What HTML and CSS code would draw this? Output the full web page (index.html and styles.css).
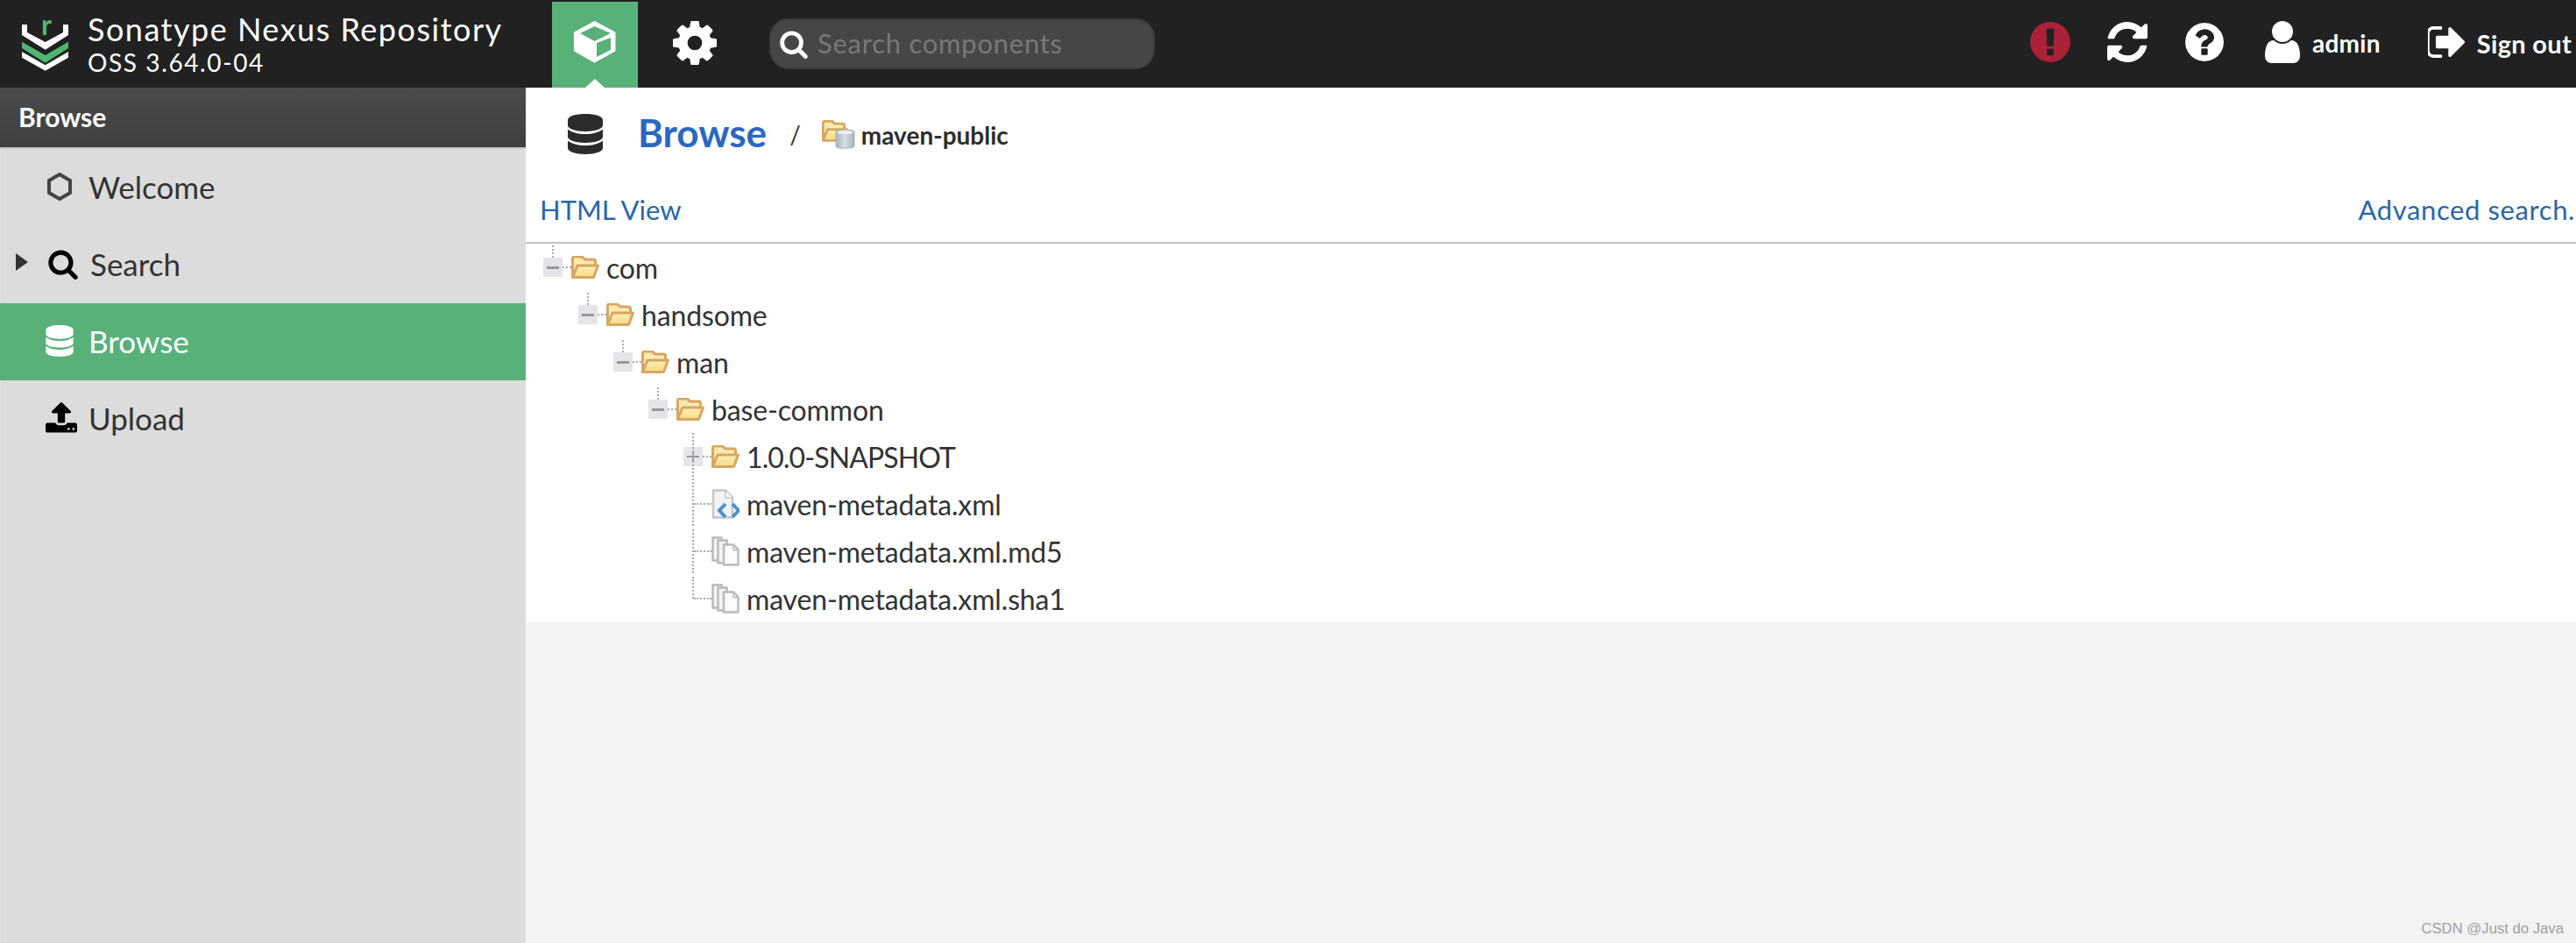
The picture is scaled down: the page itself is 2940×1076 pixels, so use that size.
FILE: index.html
```html
<!DOCTYPE html>
<html lang="en">
<head>
<meta charset="utf-8">
<title>Browse - Nexus Repository</title>
<link rel="stylesheet" href="styles.css">
</head>
<body>
<svg class="defs" width="0" height="0" aria-hidden="true">
  <defs>
    <linearGradient id="fg" x1="0" y1="0" x2="0" y2="1"><stop offset="0" stop-color="#fdf0b8"/><stop offset="1" stop-color="#f6d985"/></linearGradient>
    <linearGradient id="cyl" x1="0" y1="0" x2="1" y2="0"><stop offset="0" stop-color="#aeb7be"/><stop offset=".5" stop-color="#d5dce1"/><stop offset="1" stop-color="#a9b2b9"/></linearGradient>
    <symbol id="folder" viewBox="0 0 32 26">
      <path d="M1.500 24.500V3a2 2 0 0 1 2-2h9l3 3h10a2 2 0 0 1 2 2v5" fill="#fbeab0" stroke="#d6a663" stroke-width="3"/>
      <path d="M1.500 24.500L7 11h23.500l-5 13.500z" fill="url(#fg)" stroke="#d6a663" stroke-width="3" stroke-linejoin="round"/>
    </symbol>
    <symbol id="doc" viewBox="0 0 32 34">
      <path d="M2 1.500h14l8 8v23H2z" fill="#f2f3f6" stroke="#c4c6ca" stroke-width="2.400"/>
      <path d="M16 2v8h8" fill="#fff" stroke="#c4c6ca" stroke-width="1.600"/>
      <path d="M16 17l-7 7.500 7 7.500M24 17l7 7.500-7 7.500" fill="none" stroke="#4a90cc" stroke-width="4"/>
    </symbol>
    <symbol id="files" viewBox="0 0 32 34">
      <path d="M1.500 1.500h10v26h-10z" fill="#f1f2f3" stroke="#b9babd" stroke-width="2.400"/>
      <path d="M7.500 4.500h10v26h-10z" fill="#f1f2f3" stroke="#b9babd" stroke-width="2.400"/>
      <path d="M14 9.500h11l5.500 5.500v17.500H14z" fill="#fbfbfb" stroke="#b9babd" stroke-width="2.400"/>
      <path d="M25 10v5.500h5.500" fill="none" stroke="#b9babd" stroke-width="1.400"/>
    </symbol>
    <symbol id="db" viewBox="0 0 40 46">
      <path d="M0 7C0 2.500 9 0 20 0s20 2.500 20 7v6c0 4-9 7-20 7S0 17 0 13z"/>
      <path d="M0 17.500c4 3.500 12 5.500 20 5.500s16-2 20-5.500V26c0 4-9 7-20 7S0 30 0 26z"/>
      <path d="M0 30.500c4 3.500 12 5.500 20 5.500s16-2 20-5.500V39c0 4-9 7-20 7S0 43 0 39z"/>
    </symbol>
    <symbol id="mag" viewBox="0 0 1792 1792"><path d="M1216 832q0-185-131.500-316.500t-316.500-131.500-316.500 131.500-131.500 316.500 131.500 316.500 316.500 131.500 316.500-131.500 131.500-316.500zm512 832q0 52-38 90t-90 38q-54 0-90-38l-343-342q-179 124-399 124-143 0-273.500-55.500t-225-150-150-225-55.500-273.500 55.500-273.500 150-225 225-150 273.500-55.500 273.500 55.500 225 150 150 225 55.500 273.500q0 220-124 399l343 343q37 37 37 90z"/></symbol>
  </defs>
</svg>

<div class="app">
  <header class="topbar">
    <div class="brand">
      <svg class="logo" viewBox="0 0 53 60" aria-hidden="true">
        <path d="M0 4h6v9l20.700 11L47 13V4h6v12L26.700 32.700 0 16z" fill="#fff"/>
        <path d="M0 23.700L26.700 39 53 23.700V31L26.700 47.700 0 31z" fill="#4fb573"/>
        <path d="M0 35l26.700 15.300L53 35v6.700L26.700 56.700 0 41.700z" fill="#fff"/>
        <text x="22" y="16" class="logo-r">r</text>
      </svg>
      <div class="brand-text">
        <div class="brand-name">Sonatype Nexus Repository</div>
        <div class="brand-ver">OSS 3.64.0-04</div>
      </div>
    </div>
    <div class="mode-tab active">
      <svg class="ico-cube" viewBox="0 0 48 48" aria-hidden="true">
        <path d="M23.500 1.500L46 13.500v20L23.500 46 1.500 33.500v-20z" fill="#fff" stroke="#fff" stroke-width="3" stroke-linejoin="round"/>
        <path d="M7 14l16.500-8L42 14l-18.500 9z" fill="#59b17a"/>
        <path d="M26 25l16-6v14l-16 8z" fill="#59b17a"/>
      </svg>
    </div>
    <div class="mode-tab gear-tab">
      <svg class="ico-gear" viewBox="128 128 1536 1536" aria-hidden="true"><path d="M1152 896q0-106-75-181t-181-75-181 75-75 181 75 181 181 75 181-75 75-181zm512-109v222q0 12-8 23t-20 13l-185 28q-19 54-39 91 35 50 107 138 10 12 10 25t-9 23q-27 37-99 108t-94 71q-12 0-26-9l-138-108q-44 23-91 38-16 136-29 186-7 28-36 28h-222q-14 0-24.500-8.500t-11.500-21.500l-28-184q-49-16-90-37l-141 107q-10 9-25 9-14 0-25-11-126-114-165-168-7-10-7-23 0-12 8-23 15-21 51-66.500t54-70.500q-27-50-41-99l-183-27q-13-2-21-12.500t-8-23.500v-222q0-12 8-23t19-13l186-28q14-46 39-92-40-57-107-138-10-12-10-24 0-10 9-23 26-36 98.500-107.500t94.500-71.500q13 0 26 10l138 107q44-23 91-38 16-136 29-186 7-28 36-28h222q14 0 24.500 8.500t11.500 21.500l28 184q49 16 90 37l142-107q9-9 24-9 13 0 25 10 129 119 165 170 7 8 7 22 0 12-8 23-15 21-51 66.500t-54 70.500q26 50 41 98l183 28q13 2 21 12.500t8 23.500z"/></svg>
    </div>
    <div class="searchbox">
      <svg class="ico-search"><use href="#mag"/></svg>
      <span class="placeholder">Search components</span>
    </div>
    <div class="spacer"></div>
    <svg class="ico-alert" viewBox="128 128 1536 1536" aria-hidden="true"><path d="M896 128q209 0 385 103t279 279 103 386-103 385.500-279 279.500-385 103-385.500-103-279.500-279.500-103-385.500 103-386 279.500-279 385.500-103zm128 1247v-190q0-14-9-23.500t-22-9.500h-192q-13 0-23 10t-10 23v190q0 13 10 23t23 10h192q13 0 22-9.500t9-23.500zm-2-344l18-621q0-12-10-18-10-8-24-8h-220q-14 0-24 8-10 6-10 18l17 621q0 10 10 17.500t24 7.500h185q14 0 23.500-7.500t10.500-17.500z"/></svg>
    <svg class="ico-refresh" viewBox="128 128 1536 1536" aria-hidden="true"><path d="M1639 1056q0 5-1 7-64 268-268 434.500t-478 166.500q-146 0-282.500-55t-243.500-157l-129 129q-19 19-45 19t-45-19-19-45v-448q0-26 19-45t45-19h448q26 0 45 19t19 45-19 45l-137 137q71 66 161 102t187 36q134 0 250-65t186-179q11-17 53-117 8-23 30-23h192q13 0 22.500 9.500t9.500 22.500zm25-800v448q0 26-19 45t-45 19h-448q-26 0-45-19t-19-45 19-45l138-138q-148-137-349-137-134 0-250 65t-186 179q-11 17-53 117-8 23-30 23h-199q-13 0-22.500-9.500t-9.500-22.500v-7q65-268 270-434.500t480-166.500q146 0 284 55.500t245 156.500l130-129q19-19 45-19t45 19 19 45z"/></svg>
    <svg class="ico-help" viewBox="128 128 1536 1536" aria-hidden="true"><path d="M1024 1376v-192q0-14-9-23t-23-9h-192q-14 0-23 9t-9 23v192q0 14 9 23t23 9h192q14 0 23-9t9-23zm256-672q0-88-55.500-163t-138.500-116-170-41q-243 0-371 213-15 24 8 42l132 100q7 6 19 6 16 0 25-12 53-68 86-92 34-24 86-24 48 0 85.500 26t37.500 59q0 38-20 61t-68 45q-63 28-115.500 86.500t-52.500 125.500v36q0 14 9 23t23 9h192q14 0 23-9t9-23q0-19 21.500-49.500t54.500-49.500q32-18 49-28.500t46-35 44.500-48 28-60.500 12.500-81zm384 192q0 209-103 385.500t-279.500 279.500-385.500 103-385.500-103-279.500-279.500-103-385.500 103-385.500 279.500-279.500 385.500-103 385.500 103 279.500 279.500 103 385.500z"/></svg>
    <svg class="ico-user" viewBox="256 128 1280 1536" aria-hidden="true"><path d="M1536 1399q0 109-62.500 187t-150.500 78h-854q-88 0-150.500-78t-62.500-187q0-85 8.500-160.500t31.500-152 58.500-131 94-89 134.500-34.500q131 128 313 128t313-128q76 0 134.500 34.500t94 89 58.500 131 31.500 152 8.500 160.500zm-256-887q0 159-112.500 271.500t-271.500 112.500-271.500-112.500-112.500-271.500 112.500-271.500 271.500-112.500 271.500 112.500 112.500 271.500z"/></svg>
    <span class="tb-label label-admin">admin</span>
    <svg class="ico-signout" viewBox="128 256 1536 1280" aria-hidden="true"><path d="M704 1440q0 4 1 20t.5 26.500-3 23.500-10 19.500-20.500 6.500h-320q-119 0-203.500-84.500t-84.500-203.500v-704q0-119 84.500-203.500t203.500-84.500h320q13 0 22.500 9.500t9.500 22.500q0 4 1 20t.5 26.500-3 23.500-10 19.500-20.500 6.500h-320q-66 0-113 47t-47 113v704q0 66 47 113t113 47h312l11.500 1 11.500 3 8 5.500 7 9 2 13.500zm928-544q0 26-19 45l-544 544q-19 19-45 19t-45-19-19-45v-288h-448q-26 0-45-19t-19-45v-384q0-26 19-45t45-19h448v-288q0-26 19-45t45-19 45 19l544 544q19 19 19 45z"/></svg>
    <span class="tb-label label-signout">Sign out</span>
  </header>

  <div class="body">
    <aside class="sidebar">
      <div class="side-head">Browse</div>
      <nav class="side-nav">
        <div class="nav-row">
          <span class="caret-slot"></span>
          <span class="nav-ico"><svg class="ico-hex" viewBox="0 0 30 32" aria-hidden="true"><path d="M15 2l12 7v14l-12 7-12-7V9z" fill="none" stroke="#444" stroke-width="4"/></svg></span>
          <span>Welcome</span>
        </div>
        <div class="nav-row">
          <span class="caret-slot"><span class="caret"></span></span>
          <span class="nav-ico"><svg class="ico-nav-search"><use href="#mag"/></svg></span>
          <span class="nav-search-label">Search</span>
        </div>
        <div class="nav-row selected">
          <span class="caret-slot"></span>
          <span class="nav-ico"><svg class="ico-nav-db"><use href="#db"/></svg></span>
          <span>Browse</span>
        </div>
        <div class="nav-row">
          <span class="caret-slot"></span>
          <span class="nav-ico"><svg class="ico-upload" viewBox="64 128 1664 1536" aria-hidden="true"><path d="M1344 1472q0-26-19-45t-45-19-45 19-19 45 19 45 45 19 45-19 19-45zm256 0q0-26-19-45t-45-19-45 19-19 45 19 45 45 19 45-19 19-45zm128-224v320q0 40-28 68t-68 28h-1472q-40 0-68-28t-28-68v-320q0-40 28-68t68-28h427q21 56 70.500 92t110.500 36h256q61 0 110.500-36t70.500-92h427q40 0 68 28t28 68zm-325-648q-17 40-59 40h-256v448q0 26-19 45t-45 19h-256q-26 0-45-19t-19-45v-448h-256q-42 0-59-40-17-39 14-69l448-448q18-19 45-19t45 19l448 448q31 30 14 69z"/></svg></span>
          <span>Upload</span>
        </div>
      </nav>
    </aside>

    <main class="main">
      <section class="panel">
        <div class="crumbs">
          <svg class="ico-title-db"><use href="#db"/></svg>
          <span class="crumb-title">Browse</span>
          <span class="crumb-sep">/</span>
          <svg class="ico-repo" viewBox="0 0 38 34" aria-hidden="true">
            <use href="#folder" width="30" height="25"/>
            <path d="M16 13c0-2.500 21-2.500 21 0v17c0 3-21 3-21 0z" fill="url(#cyl)" stroke="#a4adb4"/>
            <ellipse cx="26.500" cy="14" rx="9" ry="2.500" fill="#e9edf0"/>
          </svg>
          <span class="crumb-repo">maven-public</span>
        </div>
        <div class="linkbar">
          <span class="link">HTML View</span>
          <span class="link link-adv">Advanced search.</span>
        </div>
        <div class="tree">
          <div class="tree-row lvl-0"><span class="tog minus"></span><svg class="node folder"><use href="#folder"/></svg><span class="label">com</span></div>
          <div class="tree-row lvl-1"><span class="tog minus"></span><svg class="node folder"><use href="#folder"/></svg><span class="label">handsome</span></div>
          <div class="tree-row lvl-2"><span class="tog minus"></span><svg class="node folder"><use href="#folder"/></svg><span class="label">man</span></div>
          <div class="tree-row lvl-3"><span class="tog minus"></span><svg class="node folder"><use href="#folder"/></svg><span class="label">base-common</span></div>
          <div class="tree-row lvl-4"><span class="tog plus"></span><svg class="node folder"><use href="#folder"/></svg><span class="label caps">1.0.0-SNAPSHOT</span></div>
          <div class="tree-row lvl-4"><span class="tog leaf"></span><svg class="node file"><use href="#doc"/></svg><span class="label">maven-metadata.xml</span></div>
          <div class="tree-row lvl-4"><span class="tog leaf"></span><svg class="node file"><use href="#files"/></svg><span class="label">maven-metadata.xml.md5</span></div>
          <div class="tree-row lvl-4"><span class="tog leaf last"></span><svg class="node file"><use href="#files"/></svg><span class="label">maven-metadata.xml.sha1</span></div>
        </div>
      </section>
    </main>
  </div>
  <div class="watermark">CSDN @Just do Java</div>
</div>
</body>
</html>
```

FILE: styles.css
```css
* { box-sizing: border-box; }
html, body { margin: 0; height: 100%; overflow: hidden; }
body { font-family: Lato, "Open Sans", sans-serif; color: #333; }
.defs { position: absolute; }
.app { height: 1076px; display: flex; flex-direction: column; position: relative; background: #f3f3f3; }

.topbar { height: 100px; flex: none; background: #212121; display: flex; align-items: center; color: #fff; fill: #fff; }
.brand { width: 630px; flex: none; display: flex; align-items: center; padding-left: 25px; }
.logo { width: 53px; height: 60px; margin: 8px 22px 0 0; overflow: visible; }
.logo-r { font: 700 32px Lato, sans-serif; fill: #4fb573; }
.brand-text { display: flex; flex-direction: column; }
.brand-name { font-size: 36px; line-height: 42px; letter-spacing: 1.5px; }
.brand-ver { font-size: 28px; line-height: 34px; letter-spacing: 1.6px; }
.mode-tab { width: 98px; height: 98px; margin-top: 2px; flex: none; display: flex; align-items: center; justify-content: center; position: relative; }
.gear-tab { width: 130px; }
.mode-tab.active { background: #59b17a; }
.mode-tab.active::after { content: ""; position: absolute; left: 38px; bottom: 0; border: 11px solid transparent; border-top: 0; border-bottom: 10px solid #fff; }
.ico-cube { width: 48px; height: 48px; margin-top: -6px; }
.ico-gear { width: 50px; height: 50px; margin-top: -4px; }
.searchbox { margin-left: 20px; width: 440px; height: 58px; border-radius: 22px; background: #464646; border: 2px solid #3c3c3c; display: flex; align-items: center; padding-left: 9px; }
.ico-search { width: 34px; height: 34px; margin-right: 10px; }
.placeholder { font-size: 31px; letter-spacing: .75px; color: #787878; margin-top: -2px; }
.spacer { flex: 1; }
.ico-alert { width: 46px; height: 46px; fill: #a92237; margin-top: -4px; }
.ico-refresh { width: 46px; height: 46px; margin-left: 42px; margin-top: -4px; }
.ico-help { width: 44px; height: 44px; margin-left: 43px; margin-top: -4px; }
.ico-user { width: 42px; height: 48px; margin-left: 46px; margin-top: -4px; }
.tb-label { font-size: 28px; font-weight: 700; letter-spacing: .3px; margin-top: -2px; }
.label-admin { margin-left: 13px; margin-right: 54px; }
.ico-signout { width: 43px; height: 36px; margin-top: -4px; margin-right: 13px; }
.label-signout { margin-right: 5px; font-size: 29px; }

.body { flex: 1; display: flex; min-height: 0; }
.sidebar { width: 600px; flex: none; background: #dcdcdc; border-left: 1px solid #e2e2e2; }
.side-head { height: 70px; background: linear-gradient(#4b4b4b, #3f3f3f); border-bottom: 2px solid #c6c6c6; margin-left: -1px; color: #fff; font-weight: 700; font-size: 30px; line-height: 66px; padding-left: 21px; }
.nav-row { height: 88px; display: flex; align-items: center; font-size: 35px; color: #333; padding-bottom: 2px; }
.nav-row.selected { background: #59b17a; color: #fff; fill: #fff; margin-left: -1px; padding-left: 1px; }
.caret-slot { width: 51px; flex: none; display: flex; padding-left: 17px; }
.caret { border: 10px solid transparent; border-left: 14px solid #333; border-right: 0; margin-top: -4px; }
.nav-ico { width: 49px; flex: none; display: flex; align-items: center; }
.ico-hex { width: 30px; height: 32px; margin-left: 1px; }
.ico-nav-search { width: 36px; height: 36px; margin-left: 2px; fill: #000; }
.nav-search-label { margin-left: 2px; }
.ico-nav-db { width: 32px; height: 36px; }
.ico-upload { width: 36px; height: 36px; fill: #000; }

.main { flex: 1; min-width: 0; }
.panel { background: #fff; height: 610px; }
.crumbs { height: 106px; display: flex; align-items: center; padding-left: 48px; }
.ico-title-db { width: 40px; height: 46px; fill: #2c2c2c; }
.crumb-title { margin-left: 40px; font-size: 44px; font-weight: 700; color: #2a68c0; margin-top: -4px; }
.crumb-sep { margin-left: 26px; font-size: 28px; }
.ico-repo { width: 38px; height: 34px; margin-left: 24px; margin-top: 2px; filter: blur(.5px); }
.crumb-repo { margin-left: 7px; font-size: 28px; font-weight: 700; color: #2d2d2d; margin-top: 2px; }
.linkbar { height: 72px; display: flex; justify-content: space-between; align-items: center; padding: 0 1px 4px 16px; border-bottom: 2px solid #c0c0c0; }
.link { font-size: 31px; color: #2a66a8; }
.link-adv { letter-spacing: .6px; }
.tree-row { height: 54px; display: flex; align-items: center; font-size: 32px; color: #333; }
.label { letter-spacing: -.15px; }
.caps { letter-spacing: -.9px; }
.lvl-0 { padding-left: 20px; }
.lvl-1 { padding-left: 60px; }
.lvl-2 { padding-left: 100px; }
.lvl-3 { padding-left: 140px; }
.lvl-4 { padding-left: 180px; }
.tog { width: 22px; height: 22px; flex: none; position: relative; background: #e6e7ea; margin-right: 10px; }
.tog::before { content: ""; position: absolute; left: 10px; top: -14px; height: 14px; border-left: 2px dotted #aaa; }
.tog::after { content: ""; position: absolute; left: 22px; top: 10px; width: 10px; border-top: 2px dotted #aaa; }
.minus { background: linear-gradient(#999, #999) center / 14px 3px no-repeat #e4e5e9; }
.plus { background: linear-gradient(#999, #999) center / 14px 2px no-repeat, linear-gradient(#999, #999) center / 2px 14px no-repeat, #e4e5e9; }
.plus::before { top: -16px; height: 54px; }
.leaf { background: none; }
.leaf::before { top: -14px; height: 50px; }
.leaf.last::before { height: 25px; }
.leaf::after { left: 12px; width: 20px; }
.node { width: 32px; flex: none; margin-right: 8px; filter: blur(.4px); }
.node.folder { height: 26px; }
.node.file { height: 34px; }

.watermark { position: absolute; right: 14px; bottom: 6px; font: 16.700px "Liberation Sans", sans-serif; color: #a0a0a0; }
```
